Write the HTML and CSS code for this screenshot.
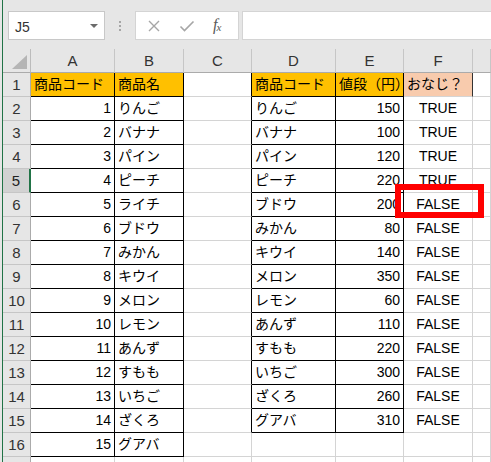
FILE: index.html
```html
<!DOCTYPE html>
<html lang="ja">
<head>
<meta charset="utf-8">
<title>Sheet</title>
<link rel="stylesheet" href="styles.css">
</head>
<body>
<div class="app">
  <div class="toolbar">
    <div class="namebox">
      <span class="nb-text">J5</span>
      <span class="nb-arrow"></span>
    </div>
    <div class="dots"><span></span><span></span><span></span></div>
    <div class="fbtns">
      <svg class="ic" width="14" height="14" viewBox="0 0 14 14"><path d="M2 2 L12 12 M12 2 L2 12" stroke="#a6a6a6" stroke-width="1.4" fill="none"/></svg>
      <svg class="ic" width="16" height="14" viewBox="0 0 16 14"><path d="M1.5 7.5 L5.5 11.5 L14.5 2.5" stroke="#a6a6a6" stroke-width="1.6" fill="none"/></svg>
      <span class="fx">f<sub>x</sub></span>
    </div>
    <div class="fbar"></div>
  </div>
  <div class="sheet">
    <div class="corner"><span class="tri"></span></div>
    <div class="h">A</div><div class="h">B</div><div class="h">C</div><div class="h">D</div><div class="h">E</div><div class="h">F</div><div class="h"></div>

    <div class="r">1</div>
    <div class="c g bx">商品コード</div><div class="c g bx">商品名</div><div class="c br"></div>
    <div class="c g bx">商品コード</div><div class="c g bx">値段（円）</div><div class="c p fr">おなじ？</div><div class="c"></div>

    <div class="r">2</div>
    <div class="c n bx">1</div><div class="c bx">りんご</div><div class="c br"></div>
    <div class="c bx">りんご</div><div class="c n bx">150</div><div class="c t">TRUE</div><div class="c"></div>

    <div class="r">3</div>
    <div class="c n bx">2</div><div class="c bx">バナナ</div><div class="c br"></div>
    <div class="c bx">バナナ</div><div class="c n bx">100</div><div class="c t">TRUE</div><div class="c"></div>

    <div class="r">4</div>
    <div class="c n bx">3</div><div class="c bx">パイン</div><div class="c br"></div>
    <div class="c bx">パイン</div><div class="c n bx">120</div><div class="c t">TRUE</div><div class="c"></div>

    <div class="r sel">5</div>
    <div class="c n bx">4</div><div class="c bx">ピーチ</div><div class="c br"></div>
    <div class="c bx">ピーチ</div><div class="c n bx">220</div><div class="c t">TRUE</div><div class="c"></div>

    <div class="r">6</div>
    <div class="c n bx">5</div><div class="c bx">ライチ</div><div class="c br"></div>
    <div class="c bx">ブドウ</div><div class="c n bx">200</div><div class="c t mark">FALSE<span class="redbox"></span></div><div class="c"></div>

    <div class="r">7</div>
    <div class="c n bx">6</div><div class="c bx">ブドウ</div><div class="c br"></div>
    <div class="c bx">みかん</div><div class="c n bx">80</div><div class="c t">FALSE</div><div class="c"></div>

    <div class="r">8</div>
    <div class="c n bx">7</div><div class="c bx">みかん</div><div class="c br"></div>
    <div class="c bx">キウイ</div><div class="c n bx">140</div><div class="c t">FALSE</div><div class="c"></div>

    <div class="r">9</div>
    <div class="c n bx">8</div><div class="c bx">キウイ</div><div class="c br"></div>
    <div class="c bx">メロン</div><div class="c n bx">350</div><div class="c t">FALSE</div><div class="c"></div>

    <div class="r">10</div>
    <div class="c n bx">9</div><div class="c bx">メロン</div><div class="c br"></div>
    <div class="c bx">レモン</div><div class="c n bx">60</div><div class="c t">FALSE</div><div class="c"></div>

    <div class="r">11</div>
    <div class="c n bx">10</div><div class="c bx">レモン</div><div class="c br"></div>
    <div class="c bx">あんず</div><div class="c n bx">110</div><div class="c t">FALSE</div><div class="c"></div>

    <div class="r">12</div>
    <div class="c n bx">11</div><div class="c bx">あんず</div><div class="c br"></div>
    <div class="c bx">すもも</div><div class="c n bx">220</div><div class="c t">FALSE</div><div class="c"></div>

    <div class="r">13</div>
    <div class="c n bx">12</div><div class="c bx">すもも</div><div class="c br"></div>
    <div class="c bx">いちご</div><div class="c n bx">300</div><div class="c t">FALSE</div><div class="c"></div>

    <div class="r">14</div>
    <div class="c n bx">13</div><div class="c bx">いちご</div><div class="c br"></div>
    <div class="c bx">ざくろ</div><div class="c n bx">260</div><div class="c t">FALSE</div><div class="c"></div>

    <div class="r">15</div>
    <div class="c n bx">14</div><div class="c bx">ざくろ</div><div class="c br"></div>
    <div class="c bx">グアバ</div><div class="c n bx">310</div><div class="c t">FALSE</div><div class="c"></div>

    <div class="r">16</div>
    <div class="c n bx">15</div><div class="c bx">グアバ</div><div class="c"></div>
    <div class="c"></div><div class="c"></div><div class="c"></div><div class="c"></div>

    <div class="r">17</div>
    <div class="c"></div><div class="c"></div><div class="c"></div>
    <div class="c"></div><div class="c"></div><div class="c"></div><div class="c"></div>
  </div>
</div>
</body>
</html>
```

FILE: styles.css
```css
* { box-sizing: border-box; }

html, body {
  margin: 0;
  padding: 0;
}

body {
  width: 491px;
  height: 462px;
  overflow: hidden;
  background: #e6e6e6;
  padding-left: 2px;
  font-family: "Liberation Sans", "Noto Sans CJK JP", sans-serif;
  color: #000;
}

.app {
  height: 462px;
  border-left: 1px solid #217346;
  display: flex;
  flex-direction: column;
  overflow: hidden;
}

/* ---------- toolbar ---------- */
.toolbar {
  height: 49px;
  flex: none;
  display: flex;
  align-items: flex-start;
  padding: 11px 0 0 5px;
  background: #e6e6e6;
}

.namebox {
  width: 97px;
  height: 29px;
  background: #fff;
  border: 1px solid #c8c8c8;
  display: flex;
  align-items: center;
  justify-content: space-between;
  padding: 0 6px 0 6px;
}

.nb-text {
  font-size: 14px;
  color: #333;
  padding-top: 2px;
}

.nb-arrow {
  width: 0;
  height: 0;
  border-left: 4px solid transparent;
  border-right: 4px solid transparent;
  border-top: 4px solid #6b6b6b;
}

.dots {
  width: 30px;
  height: 29px;
  display: flex;
  flex-direction: column;
  align-items: center;
  justify-content: center;
  gap: 2px;
}

.dots span {
  width: 2px;
  height: 2px;
  background: #a6a6a6;
}

.fbtns {
  width: 104px;
  height: 29px;
  background: #fff;
  border: 1px solid #d4d4d4;
  display: flex;
  align-items: center;
  padding-left: 11px;
}

.fbtns .ic { margin-right: 18px; }

.fx {
  font-family: "Liberation Serif", serif;
  font-style: italic;
  font-size: 16px;
  line-height: 16px;
  color: #595959;
  letter-spacing: -1px;
}

.fx sub {
  font-size: 11px;
  vertical-align: -1px;
}

.fbar {
  flex: 1;
  height: 29px;
  margin-left: 3px;
  background: #fff;
  border: 1px solid #d4d4d4;
  border-right: none;
}

/* ---------- sheet ---------- */
.sheet {
  flex: 1;
  display: grid;
  grid-template-columns: 28px 84px 69px 68px 84px 68px 69px 1fr;
  grid-auto-rows: 24px;
  background: #fff;
  font-size: 14px;
  line-height: 23px;
}

.corner {
  background: #e6e6e6;
  border-right: 1px solid #bcbcbc;
  border-bottom: 1px solid #ababab;
  position: relative;
}

.tri {
  position: absolute;
  left: 9px;
  top: 6px;
  width: 15px;
  height: 14px;
  background: #b5b5b5;
  clip-path: polygon(100% 0, 100% 100%, 0 100%);
}

.h {
  background: #e6e6e6;
  border-right: 1px solid #c6c6c6;
  border-bottom: 1px solid #ababab;
  text-align: center;
  color: #333;
  font-size: 15px;
}

.r {
  background: #e6e6e6;
  border-right: 1px solid #ababab;
  border-bottom: 1px solid #c6c6c6;
  text-align: center;
  color: #333;
  font-size: 15px;
}

.r.sel {
  background: #d2d2d2;
  border-right: 2px solid #217346;
  color: #222;
}

.c {
  border-right: 1px solid #d4d4d4;
  border-bottom: 1px solid #d4d4d4;
  padding: 0 3px;
  white-space: nowrap;
  overflow: visible;
}

.c.n { text-align: right; padding-right: 3px; }
.c.t { text-align: center; }

.c.g { background: #ffc000; }
.c.p { background: #f8cbad; }

.c.bx {
  border-right-color: #000;
  border-bottom-color: #000;
}

.c.br { border-right-color: #000; }
.c.fr { border-right-color: #333; }

.mark { position: relative; }

.redbox {
  position: absolute;
  left: -9px;
  top: -9px;
  width: 89px;
  height: 34px;
  border: 6px solid #ff0000;
  pointer-events: none;
}
```
